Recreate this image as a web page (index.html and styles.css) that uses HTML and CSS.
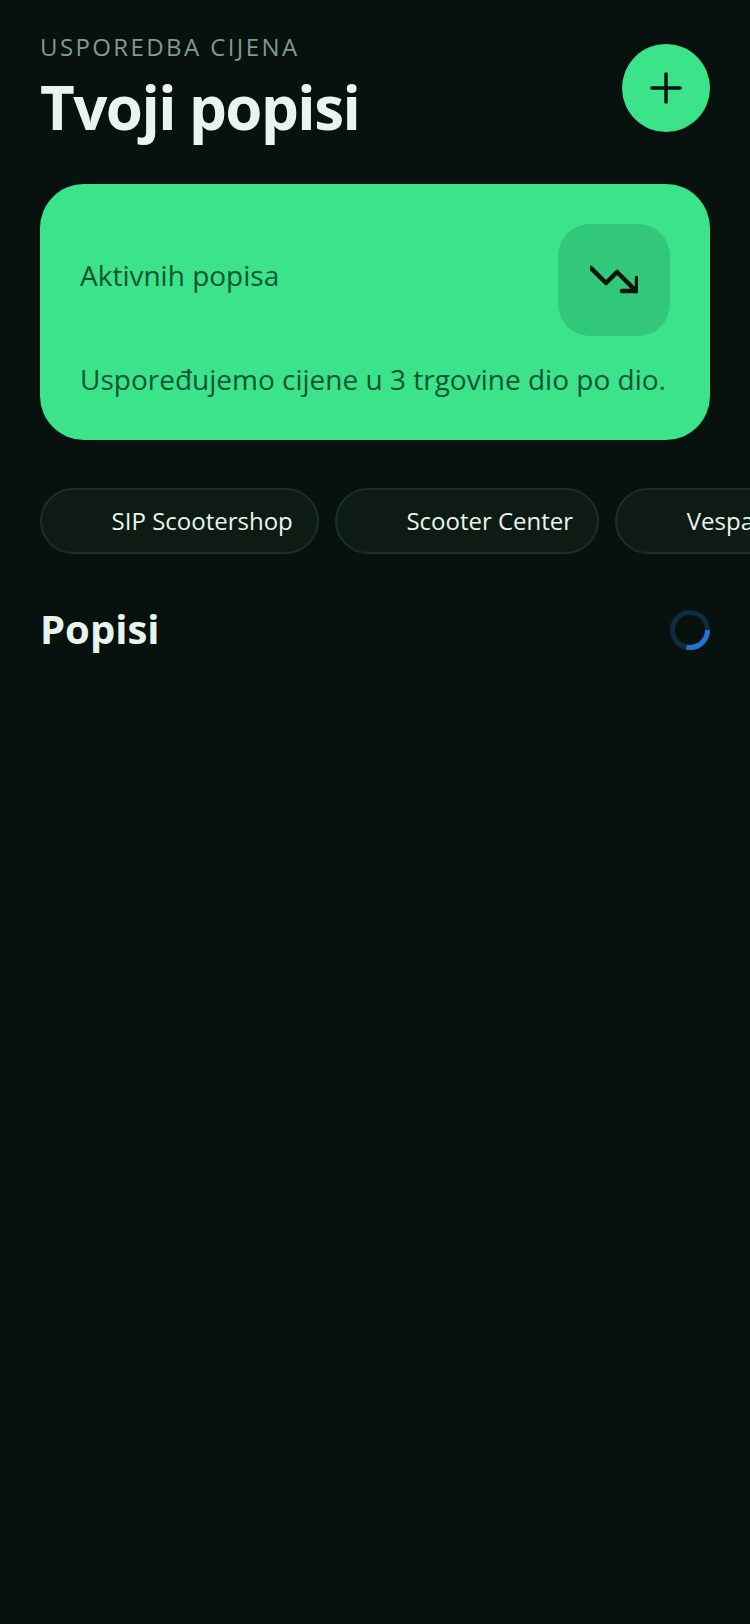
FILE: index.html
```html
<!DOCTYPE html>
<html lang="en">
<head>
    <meta charset="UTF-8">
    <meta name="viewport" content="width=device-width, initial-scale=1.0">
    <title>Tvoji popisi</title>
    <link rel="stylesheet" href="styles.css">
</head>
<body>

<header class="top">
    <div>
        <p class="eyebrow">USPOREDBA CIJENA</p>
        <h1>Tvoji popisi</h1>
    </div>
    <button class="add-button" aria-label="Dodaj">
        <svg width="32" height="32" viewBox="0 0 32 32" fill="none" stroke="#06140e" stroke-width="3.5" stroke-linecap="round">
            <path d="M16 2V30M2 16H30"/>
        </svg>
    </button>
</header>

<section class="card">
    <div class="card-top">
        <span class="card-label">Aktivnih popisa</span>
        <div class="card-icon">
            <svg width="48" height="48" viewBox="0 0 48 48" fill="none" stroke="#06140e" stroke-width="4.5" stroke-linecap="round" stroke-linejoin="round">
                <path d="M1 12L16 27L27 16L46 35"/>
                <path d="M32 35H47V22"/>
            </svg>
        </div>
    </div>
    <p class="card-text">Uspoređujemo cijene u 3 trgovine dio po dio.</p>
</section>

<nav class="chips">
    <div class="chip">SIP Scootershop</div>
    <div class="chip">Scooter Center</div>
    <div class="chip">Vespa Shop</div>
</nav>

<section class="lists-head">
    <h2>Popisi</h2>
    <svg class="spinner" width="40" height="40" viewBox="0 0 40 40" fill="none" stroke-width="5">
        <circle cx="20" cy="20" r="17.5" stroke="#0e2b41"/>
        <circle cx="20" cy="20" r="17.5" stroke="#1f76d2" stroke-dasharray="31 79"/>
    </svg>
</section>

</body>
</html>
```

FILE: styles.css
```css
:root {
    --background-color: #07110d;
    --accent-color: #3be48a;
    --title-color: #e8f5ee;
    --font-family: 'Open Sans', sans-serif;
}

html, body {
    height: 100%;
}

body {
    margin: 0;
    padding: 31px 0 0 40px;
    box-sizing: border-box;
    overflow: hidden;
    font-family: var(--font-family);
    background-color: var(--background-color);
    color: var(--title-color);
}

.top {
    display: flex;
    justify-content: space-between;
    align-items: flex-start;
    margin-right: 40px;
}

.eyebrow {
    margin: 0;
    font-size: 24px;
    line-height: 32px;
    letter-spacing: 2.4px;
    color: #7f9b8d;
}

h1 {
    margin: 4px 0 0;
    font-size: 60px;
    line-height: 80px;
    font-weight: 700;
    letter-spacing: -1.55px;
}

.add-button {
    width: 88px;
    height: 88px;
    margin-top: 13px;
    padding: 0;
    border: none;
    border-radius: 50%;
    background-color: var(--accent-color);
    display: flex;
    align-items: center;
    justify-content: center;
}

.card {
    margin: 37px 40px 0 0;
    padding: 40px;
    height: 256px;
    box-sizing: border-box;
    border-radius: 44px;
    background-color: var(--accent-color);
    color: #0f5533;
}

.card-top {
    display: flex;
    justify-content: space-between;
    align-items: center;
}

.card-label {
    font-size: 28px;
    line-height: 38px;
    padding-bottom: 10px;
}

.card-icon {
    width: 112px;
    height: 112px;
    border-radius: 32px;
    background-color: #32c87a;
    display: flex;
    align-items: center;
    justify-content: center;
}

.card-text {
    margin: 24px 0 0;
    font-size: 28px;
    line-height: 38px;
    white-space: nowrap;
}

.chips {
    display: flex;
    gap: 16px;
    margin-top: 48px;
    overflow: hidden;
}

.chip {
    flex: none;
    height: 66px;
    box-sizing: border-box;
    padding: 0 24px 2px 69.6px;
    display: flex;
    align-items: center;
    border: 2px solid #1a3026;
    border-radius: 33px;
    background-color: #0d1b14;
    font-size: 24px;
    color: #e8f5ee;
}

.lists-head {
    display: flex;
    justify-content: space-between;
    align-items: center;
    margin: 48px 40px 0 0;
}

h2 {
    margin: 0;
    font-size: 40px;
    line-height: 54px;
    font-weight: 700;
}

.spinner {
    flex: none;
    margin-top: 2px;
}
```
